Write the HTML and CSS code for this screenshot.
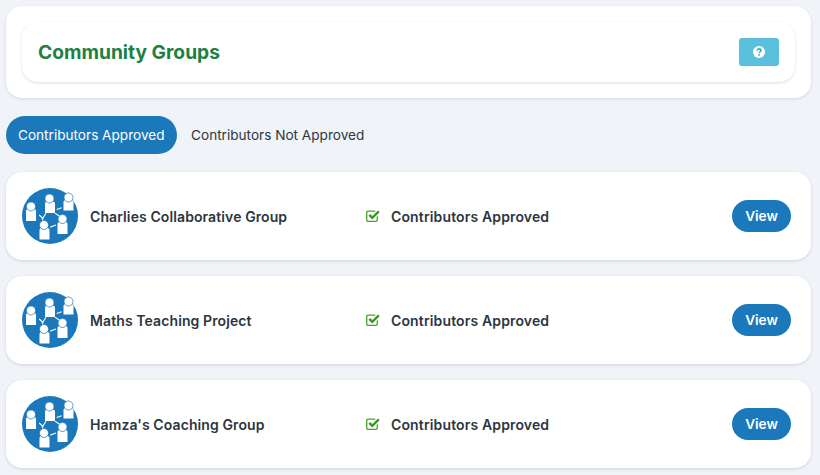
FILE: index.html
```html
<!DOCTYPE html>
<html lang="en">
<head>
<meta charset="utf-8">
<title>Community Groups</title>
<link rel="stylesheet" href="styles.css">
</head>
<body>
<svg class="sprite" width="0" height="0" aria-hidden="true">
  <symbol id="group" viewBox="0 0 56 56">
    <circle cx="28" cy="28" r="28" fill="#1a78bb"/>
    <g fill="#fff">
      <path d="M4 23q0-2 2-2h6q2 0 2 2V33H4z"/>
      <path d="M23 15.500q0-2 2-2h6q2 0 2 2V25H23z"/>
      <path d="M41.500 14q0-2 2-2h6q2 0 2 2V22.500H41.500z"/>
      <path d="M35.500 36q0-2 2-2h6q2 0 2 2V46H35.500z"/>
      <path d="M17.500 42q0-2 2-2h6q2 0 2 2V51.500H17.500z"/>
    </g>
    <g fill="#fff" stroke="#1a78bb" stroke-width=".7">
      <circle cx="9" cy="18.500" r="4.500"/>
      <circle cx="27.500" cy="10.500" r="4.500"/>
      <circle cx="46.500" cy="9.500" r="4.500"/>
      <circle cx="40.500" cy="31" r="4.500"/>
      <circle cx="22" cy="37" r="4.500"/>
    </g>
    <path d="M34.700 21.500l5-1.700M33 25.300l4.300 2.700M28 39.300l6-2.300M17.300 27l3.400 3.500M24 25.300l-3.300 5.200V32.500" fill="none" stroke="#fff" stroke-width="1.100"/>
  </symbol>
  <symbol id="check" viewBox="0 0 14 14">
    <path d="M11.300 7.500v3.300a1.600 1.600 0 0 1-1.600 1.600H2.300A1.600 1.600 0 0 1 .7 10.800V3.700a1.600 1.600 0 0 1 1.600-1.600h7" fill="none" stroke="#4a9d2f" stroke-width="1.300"/>
    <path d="M3.300 5.800l3 3 6.500-6.500" fill="none" stroke="#379a22" stroke-width="2.500"/>
  </symbol>
</svg>
<main class="page">
  <section class="panel">
    <div class="panel-inner">
      <h1 class="title">Community Groups</h1>
      <button class="help" type="button" aria-label="Help">
        <svg class="help-icon" viewBox="0 0 12 12" width="12" height="12">
          <circle cx="6" cy="6" r="6" fill="#fff"/>
          <path d="M4.100 4.700C4.200 3.500 5 2.900 6 2.900c1.200 0 2 .6 2 1.600 0 1.400-1.800 1.300-1.800 2.600" fill="none" stroke="#3fa9c9" stroke-width="1.600"/>
          <rect x="5.300" y="8" width="1.700" height="1.600" fill="#3fa9c9"/>
        </svg>
      </button>
    </div>
  </section>

  <nav class="tabs">
    <a class="tab tab-active" href="#">Contributors Approved</a>
    <a class="tab" href="#">Contributors Not Approved</a>
  </nav>

  <section class="row">
    <svg class="avatar"><use href="#group"/></svg>
    <div class="name">Charlies Collaborative Group</div>
    <div class="status"><svg class="check"><use href="#check"/></svg><span>Contributors Approved</span></div>
    <a class="view" href="#">View</a>
  </section>
  <section class="row">
    <svg class="avatar"><use href="#group"/></svg>
    <div class="name">Maths Teaching Project</div>
    <div class="status"><svg class="check"><use href="#check"/></svg><span>Contributors Approved</span></div>
    <a class="view" href="#">View</a>
  </section>
  <section class="row">
    <svg class="avatar"><use href="#group"/></svg>
    <div class="name">Hamza's Coaching Group</div>
    <div class="status"><svg class="check"><use href="#check"/></svg><span>Contributors Approved</span></div>
    <a class="view" href="#">View</a>
  </section>
</main>
</body>
</html>
```
FILE: styles.css
```css
* { box-sizing: border-box; }
html, body { margin: 0; height: 100%; overflow: hidden; }
body {
  background: #f0f3f8;
  font-family: Inter, "Liberation Sans", sans-serif;
  color: #212529;
}
.sprite { position: absolute; }
.page {
  display: flex;
  flex-direction: column;
  padding: 6px 9px 0 6px;
}
.panel {
  background: #fff;
  border-radius: 16px;
  padding: 16px;
  box-shadow: 0 1px 3px rgba(30, 50, 80, .14);
}
.panel-inner {
  height: 60px;
  display: flex;
  align-items: center;
  justify-content: space-between;
  padding: 0 16px;
  border-radius: 16px;
  box-shadow: 0 1px 3px rgba(30, 50, 80, .16);
}
.title {
  margin: 0;
  font-size: 19.2px;
  font-weight: 700;
  color: #1e8043;
}
.help {
  width: 40px;
  height: 28px;
  padding: 0;
  border: 0;
  border-radius: 3px;
  background: #5bc0de;
  display: flex;
  align-items: center;
  justify-content: center;
}
.tabs {
  display: flex;
  margin: 18px 0;
}
.tab {
  height: 38px;
  padding: 0 12px;
  display: flex;
  align-items: center;
  border-radius: 19px;
  font-size: 13.6px;
  color: #2c3640;
  text-decoration: none;
  margin-right: 2.5px;
}
.tab-active {
  background: #1a78bb;
  color: #fff;
}
.row {
  height: 88px;
  margin-bottom: 16px;
  padding: 0 20px 0 16px;
  background: #fff;
  border-radius: 16px;
  box-shadow: 0 1px 3px rgba(30, 50, 80, .16);
  display: grid;
  grid-template-columns: 56px 288px 1fr auto;
  align-items: center;
}
.avatar {
  width: 56px;
  height: 56px;
}
.name {
  padding-left: 12px;
  font-size: 14px;
  font-weight: 600;
  letter-spacing: .1px;
  color: #2c3640;
}
.status {
  display: flex;
  align-items: center;
  font-size: 14px;
  font-weight: 600;
  letter-spacing: .14px;
  color: #2c3640;
}
.check {
  width: 14px;
  height: 14px;
  margin-right: 11px;
}
.view {
  width: 59px;
  height: 32px;
  display: flex;
  align-items: center;
  justify-content: center;
  border-radius: 16px;
  background: #1a78bb;
  color: #fff;
  font-size: 13.6px;
  font-weight: 600;
  text-decoration: none;
}
```
